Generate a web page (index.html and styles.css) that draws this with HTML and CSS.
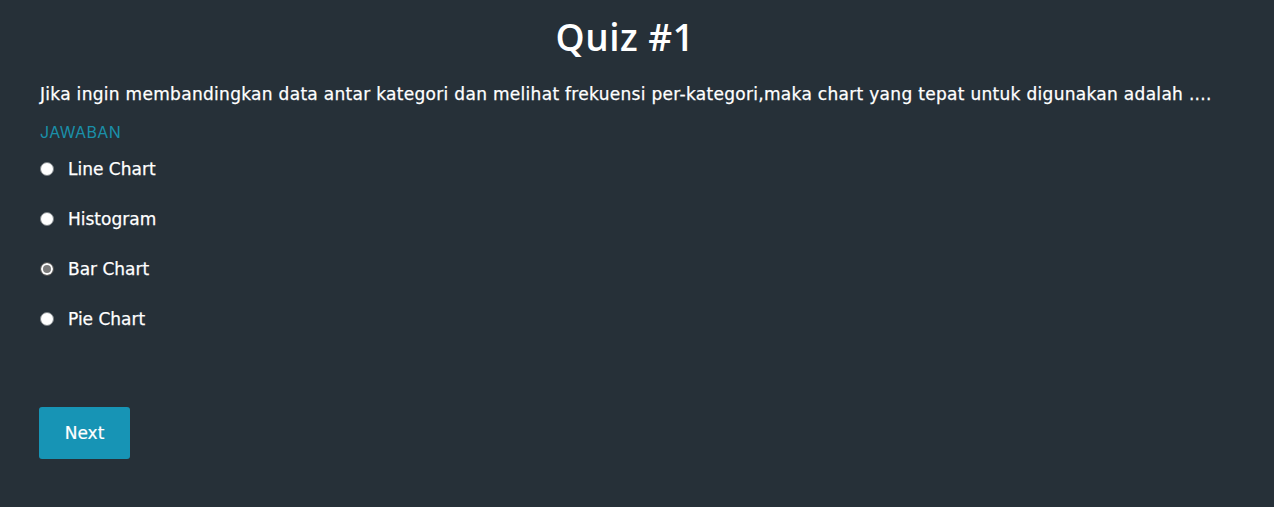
FILE: index.html
```html
<!DOCTYPE html>
<html>
<head>
<meta charset="utf-8">
<link rel="stylesheet" href="styles.css">
</head>
<body>
<main class="quiz">
  <h1 class="title">Quiz #1</h1>
  <p class="question">Jika ingin membandingkan data antar kategori dan melihat frekuensi per-kategori,maka chart yang tepat untuk digunakan adalah ....</p>
  <div class="answer-label">JAWABAN</div>
  <ul class="options">
    <li class="option"><span class="radio"></span><span class="opt-text">Line Chart</span></li>
    <li class="option"><span class="radio"></span><span class="opt-text">Histogram</span></li>
    <li class="option"><span class="radio radio-checked"></span><span class="opt-text">Bar Chart</span></li>
    <li class="option"><span class="radio"></span><span class="opt-text">Pie Chart</span></li>
  </ul>
  <button class="next-btn">Next</button>
</main>
</body>
</html>
```
FILE: styles.css
```css
html, body {
  margin: 0;
  padding: 0;
  background: #263038;
  height: 100%;
}
body {
  font-family: "DejaVu Sans", sans-serif;
  color: #ffffff;
}
.quiz {
  display: flex;
  flex-direction: column;
  align-items: flex-start;
  padding: 0 40px;
}
.title {
  align-self: center;
  margin: 14px 24px 0 0;
  font-family: "Open Sans", sans-serif;
  font-size: 37px;
  font-weight: 600;
  line-height: 46px;
  letter-spacing: 0.5px;
}
.question {
  margin: 22px 0 0;
  font-size: 17px;
  line-height: 24px;
  font-weight: 400;
  letter-spacing: 0.3px;
  -webkit-text-stroke: 0.25px #ffffff;
  white-space: nowrap;
}
.answer-label {
  margin-top: 16px;
  font-family: "Inter", "Roboto", sans-serif;
  font-size: 16px;
  line-height: 20px;
  color: #1a8fa9;
  letter-spacing: 0.4px;
}
.options {
  list-style: none;
  margin: 15px 0 0;
  padding: 0;
  display: flex;
  flex-direction: column;
  gap: 26px;
}
.option {
  display: flex;
  align-items: center;
  height: 24px;
  font-size: 17px;
  font-weight: 400;
  -webkit-text-stroke: 0.25px #ffffff;
}
.radio {
  box-sizing: border-box;
  width: 14px;
  height: 14px;
  margin-right: 14px;
  border-radius: 50%;
  background: #ffffff;
  border: 1px solid #7b8186;
}
.radio-checked {
  background: #7a7a7a;
  border: 1px solid #555;
  box-shadow: inset 0 0 0 2px #ffffff;
}
.next-btn {
  margin: 76px 0 0 -1px;
  width: 91px;
  height: 52px;
  border: none;
  border-radius: 3px;
  background: #1794b5;
  color: #ffffff;
  font-family: "DejaVu Sans", sans-serif;
  font-size: 17px;
  font-weight: 400;
  -webkit-text-stroke: 0.2px #ffffff;
  padding: 0;
}
```
